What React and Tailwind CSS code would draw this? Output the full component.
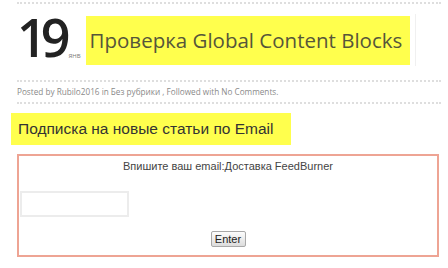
export default function App() {
  return (
    <div className="w-[448px] h-[268px] bg-white overflow-hidden relative">
      <div className="pl-[17px] pt-[2px] w-[441px]">
        <div className="border-t-2 border-dotted border-[#dedede]" />
        <div className="flex items-start h-[76px] relative">
          <div className="flex items-end mt-[8px]">
            <span className="font-['Open_Sans'] text-[52px] leading-[50px] tracking-[-6px] text-[#222] font-semibold">19</span>
            <span className="font-['Open_Sans'] text-[6px] leading-[6px] text-[#777] ml-[4px] mb-[3px]">ЯНВ</span>
          </div>
          <div className="ml-[5px] mt-[12px] w-[324px] h-[49px] bg-[#ffff4d] flex items-center pl-[4px]">
            <span className="font-['Open_Sans'] text-[20.5px] text-[#56563a] whitespace-nowrap">Проверка Global Content Blocks</span>
          </div>
          <div className="absolute left-[398px] top-[10px] h-[52px] border-l border-[#f0f0f0]" />
        </div>
        <div className="border-t-2 border-dotted border-[#dedede]" />
        <div className="h-[20px] flex items-center">
          <span className="font-['Open_Sans'] text-[8.2px] text-[#8a8a8a] whitespace-nowrap">Posted by Rubilo2016 in Без рубрики , Followed with No Comments.</span>
        </div>
        <div className="border-t-2 border-dotted border-[#dedede]" />
        <div className="-ml-[6px] mt-[9px] w-[280px] h-[32px] bg-[#ffff4d] flex items-center pl-[7px]">
          <span className="font-['Liberation_Sans'] text-[15.5px] text-[#333] whitespace-nowrap">Подписка на новые статьи по Email</span>
        </div>
        <div className="mt-[9px] w-[422px] h-[103px] border-2 border-[#eea494] flex flex-col">
          <div className="text-center mt-[3px] font-['Liberation_Sans'] text-[11px] text-[#444] leading-[14px]">Впишите ваш email:Доставка FeedBurner</div>
          <div className="ml-[1px] mt-[18px] w-[109px] h-[26px] border-2 border-[#ececec] bg-white" />
          <div className="flex justify-center mt-[14px]">
            <div className="w-[35px] h-[16px] rounded-[2px] border border-[#a8a8a8] bg-gradient-to-b from-[#fdfdfd] to-[#dcdcdc] flex items-center justify-center font-['Liberation_Sans'] text-[11px] text-[#222] leading-none">Enter</div>
          </div>
        </div>
      </div>
    </div>
  );
}
